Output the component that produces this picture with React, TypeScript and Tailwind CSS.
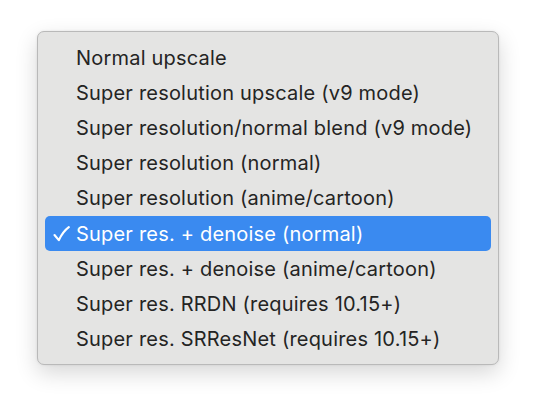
import React from 'react'

const OPTIONS = [
  'Normal upscale',
  'Super resolution upscale (v9 mode)',
  'Super resolution/normal blend (v9 mode)',
  'Super resolution (normal)',
  'Super resolution (anime/cartoon)',
  'Super res. + denoise (normal)',
  'Super res. + denoise (anime/cartoon)',
  'Super res. RRDN (requires 10.15+)',
  'Super res. SRResNet (requires 10.15+)',
]

const SELECTED = 5

function Check() {
  return (
    <svg width="17" height="16" viewBox="0 0 17 16" fill="none">
      <path d="M1.5 9 L5.8 14.2 Q10 5.5 15.8 1.2" stroke="currentColor" strokeWidth="2.1" strokeLinecap="round" strokeLinejoin="round" />
    </svg>
  )
}

export default function App() {
  return (
    <div className="w-[536px] h-[409px] bg-white pt-[31px] pl-[37px]" style={{ fontFamily: 'Inter, "Noto Sans", sans-serif' }}>
      <div className="w-[462px] h-[334px] rounded-[7px] border border-[#b9b9b9] bg-[#e4e4e3] py-[8px] px-[7px] shadow-[0_8px_22px_rgba(0,0,0,0.16),0_0_3px_rgba(0,0,0,0.08)]">
        {OPTIONS.map((label, i) => {
          const selected = i === SELECTED
          return (
            <div
              key={label}
              className={
                selected
                  ? 'h-[35.2px] flex items-center rounded-[5px] bg-[#3a8af0] text-white'
                  : 'h-[35.2px] flex items-center text-[#242424]'
              }
            >
              <span className="w-[31px] pl-[8px] flex items-center">{selected ? <Check /> : null}</span>
              <span className="text-[20px] leading-none font-normal tracking-[0.2px]">{label}</span>
            </div>
          )
        })}
      </div>
    </div>
  )
}
